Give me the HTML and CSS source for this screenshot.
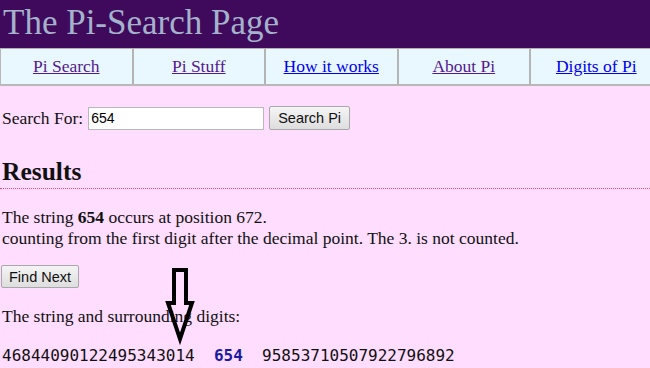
FILE: index.html
```html
<!DOCTYPE html>
<html>
<head>
<meta charset="utf-8">
<title>The Pi-Search Page</title>
<link rel="stylesheet" href="styles.css">
</head>
<body>
<div class="header"><h1 class="title">The Pi-Search Page</h1></div>
<div class="nav">
  <div class="cell"><a class="visited" href="#">Pi Search</a></div>
  <div class="cell"><a class="visited" href="#">Pi Stuff</a></div>
  <div class="cell"><a class="link" href="#">How it works</a></div>
  <div class="cell"><a class="visited" href="#">About Pi</a></div>
  <div class="cell"><a class="link" href="#">Digits of Pi</a></div>
</div>
<form class="search">
  <label class="lbl">Search For:</label>
  <input class="field" type="text" value="654">
  <button class="btn" type="button">Search Pi</button>
</form>
<h2 class="results">Results</h2>
<p class="msg">The string <b>654</b> occurs at position 672.<br>counting from the first digit after the decimal point. The 3. is not counted.</p>
<button class="btn next" type="button">Find Next</button>
<p class="msg2">The string and surrounding digits:</p>
<div class="digits">46844090122495343014  <span class="hit">654</span>  95853710507922796892</div>
<svg class="arrow" width="40" height="80" viewBox="0 0 40 80">
  <path d="M11 3 H23 V36 H29 L17 72 L5 36 H11 Z" fill="none" stroke="#000" stroke-width="4" stroke-linejoin="miter"/>
</svg>
</body>
</html>
```
FILE: styles.css
```css
html, body {
  margin: 0;
  padding: 0;
}
body {
  background: #ffddff;
  font-family: "Liberation Serif", "Times New Roman", serif;
  font-size: 17.5px;
  color: #111;
  position: relative;
  min-height: 368px;
  overflow: hidden;
}
.header {
  background: #3f0a5b;
  height: 48px;
  overflow: hidden;
}
.title {
  margin: 0;
  padding: 0 0 0 3px;
  font-weight: normal;
  font-size: 35px;
  line-height: 46px;
  color: #a4b2cc;
}
.nav {
  display: flex;
  width: 664px;
  height: 35px;
  background: #e9f8ff;
  border-top: 1px solid #b0b0b0;
  border-bottom: 2px solid #b8b8b8;
  border-left: 1px solid #b8b8b8;
}
.cell {
  flex: 0 0 130.5px;
  border-right: 2px solid #b4b4b4;
  display: flex;
  align-items: center;
  justify-content: center;
  font-size: 17.5px;
}
.visited { color: #551a8b; }
.link { color: #0000ee; }
.search {
  display: flex;
  align-items: center;
  margin: 20px 0 0 2px;
  height: 24px;
}
.lbl { margin-right: 5px; }
.field {
  width: 176px;
  height: 23px;
  box-sizing: border-box;
  border: 1px solid #b8b8b8;
  font-family: "Liberation Sans", Arial, sans-serif;
  font-size: 14px;
  padding: 1px 2px;
  margin: 0 5px 0 0;
  background: #fff;
}
.btn {
  font-family: "Liberation Sans", Arial, sans-serif;
  font-size: 14.5px;
  color: #111;
  height: 24px;
  padding: 0 8px;
  border: 1px solid #a8a8a8;
  border-radius: 2px;
  background: linear-gradient(#f4f4f4, #dedede);
}
.results {
  margin: 27px 0 0 0;
  padding-left: 2px;
  font-size: 25.5px;
  line-height: 29px;
  border-bottom: 1px dotted #ff4070;
  padding-bottom: 2px;
}
.msg {
  margin: 18px 0 0 2px;
  line-height: 21px;
}
.next {
  margin: 16px 0 0 1px;
  height: 23px;
  padding: 0 7px;
}
.msg2 {
  margin: 18px 0 0 2px;
  line-height: 21px;
}
.digits {
  margin: 19px 0 0 2px;
  font-family: "DejaVu Sans Mono", monospace;
  font-size: 16px;
  white-space: pre;
  color: #111;
}
.hit {
  color: #1a1aa0;
  font-weight: bold;
}
.arrow {
  position: absolute;
  left: 163px;
  top: 267px;
}
```
